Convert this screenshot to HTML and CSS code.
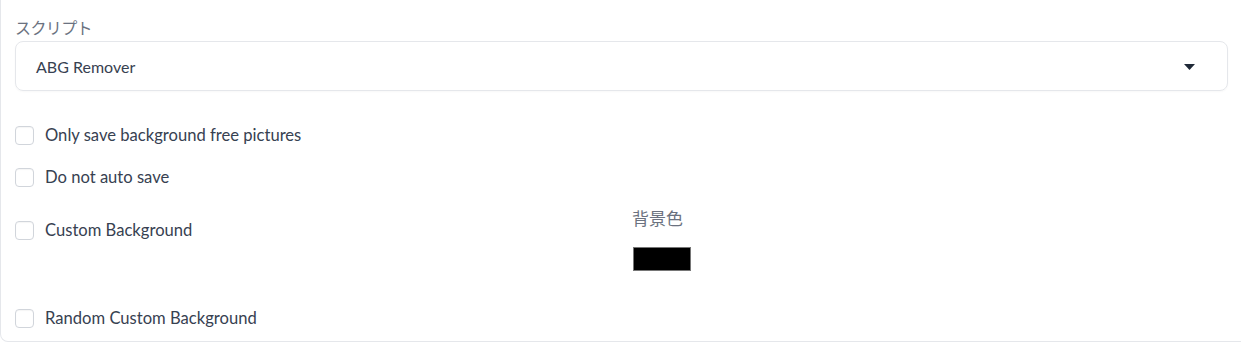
FILE: index.html
```html
<!DOCTYPE html>
<html>
<head>
    <title>ABG Remover</title>
    <link rel="stylesheet" href="styles.css">
</head>
<body>
    <div class="panel">
        <div class="field">
            <label class="field-label">スクリプト</label>
            <div class="dropdown">
                <span>ABG Remover</span>
                <svg class="caret" width="11" height="6" viewBox="0 0 11 6"><path d="M0 0 L11 0 L5.5 6 Z" fill="#1f2937"/></svg>
            </div>
        </div>

        <div class="options">
            <label class="check-row"><span class="box"></span>Only save background free pictures</label>
            <label class="check-row"><span class="box"></span>Do not auto save</label>

            <div class="split-row">
                <div class="split-col">
                    <label class="check-row shifted"><span class="box"></span>Custom Background</label>
                </div>
                <div class="split-col color-col">
                    <span class="field-label">背景色</span>
                    <div class="swatch"></div>
                </div>
            </div>

            <label class="check-row last"><span class="box"></span>Random Custom Background</label>
        </div>
    </div>
</body>
</html>
```

FILE: styles.css
```css
:root {
    --border-color: #e5e7eb;
    --text-color: #374151;
    --label-color: #6b7280;
}

html, body {
    overflow: hidden;
}

body {
    font-family: 'Lato', 'Noto Sans CJK JP', sans-serif;
    margin: 0;
    padding: 0;
    background: #ffffff;
    color: var(--text-color);
}

.panel {
    width: 1250px;
    box-sizing: border-box;
    border: 1px solid var(--border-color);
    border-top: none;
    border-radius: 0 0 8px 8px;
    padding: 17px 0 11px 14px;
    height: 342px;
}

.field {
    width: 1213px;
}

.field-label {
    display: block;
    font-size: 16px;
    line-height: 20px;
    letter-spacing: -0.6px;
    color: var(--label-color);
    font-family: 'Noto Sans CJK JP', 'Lato', sans-serif;
    font-weight: 400;
}

.dropdown {
    margin-top: 4px;
    height: 50px;
    box-sizing: border-box;
    border: 1px solid var(--border-color);
    border-radius: 8px;
    display: flex;
    align-items: center;
    justify-content: space-between;
    padding: 0 32px 0 20px;
    font-size: 16px;
    box-shadow: 0 1px 2px rgba(0, 0, 0, 0.03);
}

.caret {
    margin-top: 2px;
}

.options {
    width: 1213px;
    margin-top: 32px;
    display: flex;
    flex-direction: column;
}

.check-row {
    display: flex;
    align-items: center;
    gap: 11px;
    height: 24px;
    font-size: 16.6px;
    margin-bottom: 18px;
}

.box {
    width: 19px;
    height: 19px;
    box-sizing: border-box;
    border: 1px solid #d1d5db;
    border-radius: 4px;
    background: #ffffff;
    flex-shrink: 0;
    box-shadow: inset 0 1px 1px rgba(0, 0, 0, 0.04);
}

.split-row {
    display: flex;
    gap: 12px;
    margin-top: 1px;
}

.split-col {
    flex: 1;
}

.shifted {
    margin-top: 10px;
    margin-bottom: 0;
}

.color-col {
    padding-left: 11px;
}

.color-col .field-label {
    font-size: 17px;
    letter-spacing: 0;
    margin-left: -1px;
}

.swatch {
    margin-top: 19px;
    width: 58px;
    height: 24px;
    box-sizing: border-box;
    border: 1px solid #767676;
    background: #000000;
}

.last {
    margin-top: 35px;
    margin-bottom: 0;
}
```
